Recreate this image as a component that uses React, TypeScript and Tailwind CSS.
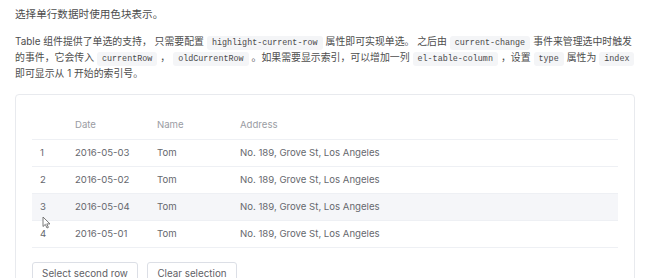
import React from 'react';

const rows = [
  { idx: 1, date: '2016-05-03', name: 'Tom', address: 'No. 189, Grove St, Los Angeles' },
  { idx: 2, date: '2016-05-02', name: 'Tom', address: 'No. 189, Grove St, Los Angeles' },
  { idx: 3, date: '2016-05-04', name: 'Tom', address: 'No. 189, Grove St, Los Angeles' },
  { idx: 4, date: '2016-05-01', name: 'Tom', address: 'No. 189, Grove St, Los Angeles' },
];

const Code: React.FC<{ children: React.ReactNode }> = ({ children }) => (
  <code className="mx-[3px] inline-block rounded-[3px] bg-[#f4f5f7] px-[5px] font-['Liberation_Mono',monospace] text-[8.4px] leading-[14px] text-[#4a4a4a]">
    {children}
  </code>
);

const Cursor: React.FC = () => (
  <svg className="absolute left-[42px] top-[216px]" width="9" height="13" viewBox="0 0 9 13">
    <path
      d="M1 1 L1 10.5 L3.3 8.4 L5 12 L6.4 11.4 L4.8 7.9 L8 7.9 Z"
      fill="#fff"
      stroke="#6b6b6b"
      strokeWidth="0.9"
      strokeLinejoin="round"
    />
  </svg>
);

const App: React.FC = () => {
  return (
    <div className="relative h-[278px] w-[658px] overflow-hidden bg-white pl-[15px] pt-[7px] font-['Inter','Noto_Sans_CJK_SC',sans-serif] text-[#4d4d4d]">
      <p className="text-[10.6px] leading-[15px]">选择单行数据时使用色块表示。</p>

      <div className="mt-[12px] text-[9.9px] leading-[15px]">
        <div className="whitespace-nowrap">
          Table 组件提供了单选的支持， 只需要配置<Code>highlight-current-row</Code>属性即可实现单选。 之后由
          <Code>current-change</Code>事件来管理选中时触发
        </div>
        <div className="whitespace-nowrap">
          的事件，它会传入<Code>currentRow</Code>，<Code>oldCurrentRow</Code>。如果需要显示索引，可以增加一列
          <Code>el-table-column</Code>，设置<Code>type</Code>属性为<Code>index</Code>
        </div>
        <div className="whitespace-nowrap">即可显示从 1 开始的索引号。</div>
      </div>

      <div className="mt-[13px] w-[620px] rounded-[4px] border border-[#e8eaee] px-[16px] pt-[17px] pb-[16px]">
        <div className="text-[9.6px]">
          <div className="flex h-[28px] items-center border-b border-[#eef0f4] text-[#9a9ca3]">
            <div className="w-[35px] pl-[8px]" />
            <div className="w-[82px] pl-[8px]">Date</div>
            <div className="w-[83px] pl-[8px]">Name</div>
            <div className="flex-1 pl-[8px]">Address</div>
          </div>
          {rows.map((r) => (
            <div
              key={r.idx}
              className={`flex h-[27px] items-center border-b border-[#eef0f4] text-[#66686e] ${
                r.idx === 3 ? 'bg-[#f5f6f9]' : 'bg-white'
              }`}
            >
              <div className="w-[35px] pl-[8px]">{r.idx}</div>
              <div className="w-[82px] pl-[8px]">{r.date}</div>
              <div className="w-[83px] pl-[8px]">{r.name}</div>
              <div className="flex-1 pl-[8px]">{r.address}</div>
            </div>
          ))}
        </div>

        <div className="mt-[14px] flex gap-[9px]">
          <button className="h-[24px] w-[106px] rounded-[3px] border border-[#dcdfe6] bg-white text-[9.8px] leading-[20px] text-[#5f6166]">
            Select second row
          </button>
          <button className="h-[24px] w-[90px] rounded-[3px] border border-[#dcdfe6] bg-white text-[9.8px] leading-[20px] text-[#5f6166]">
            Clear selection
          </button>
        </div>
      </div>

      <Cursor />
    </div>
  );
};

export default App;
